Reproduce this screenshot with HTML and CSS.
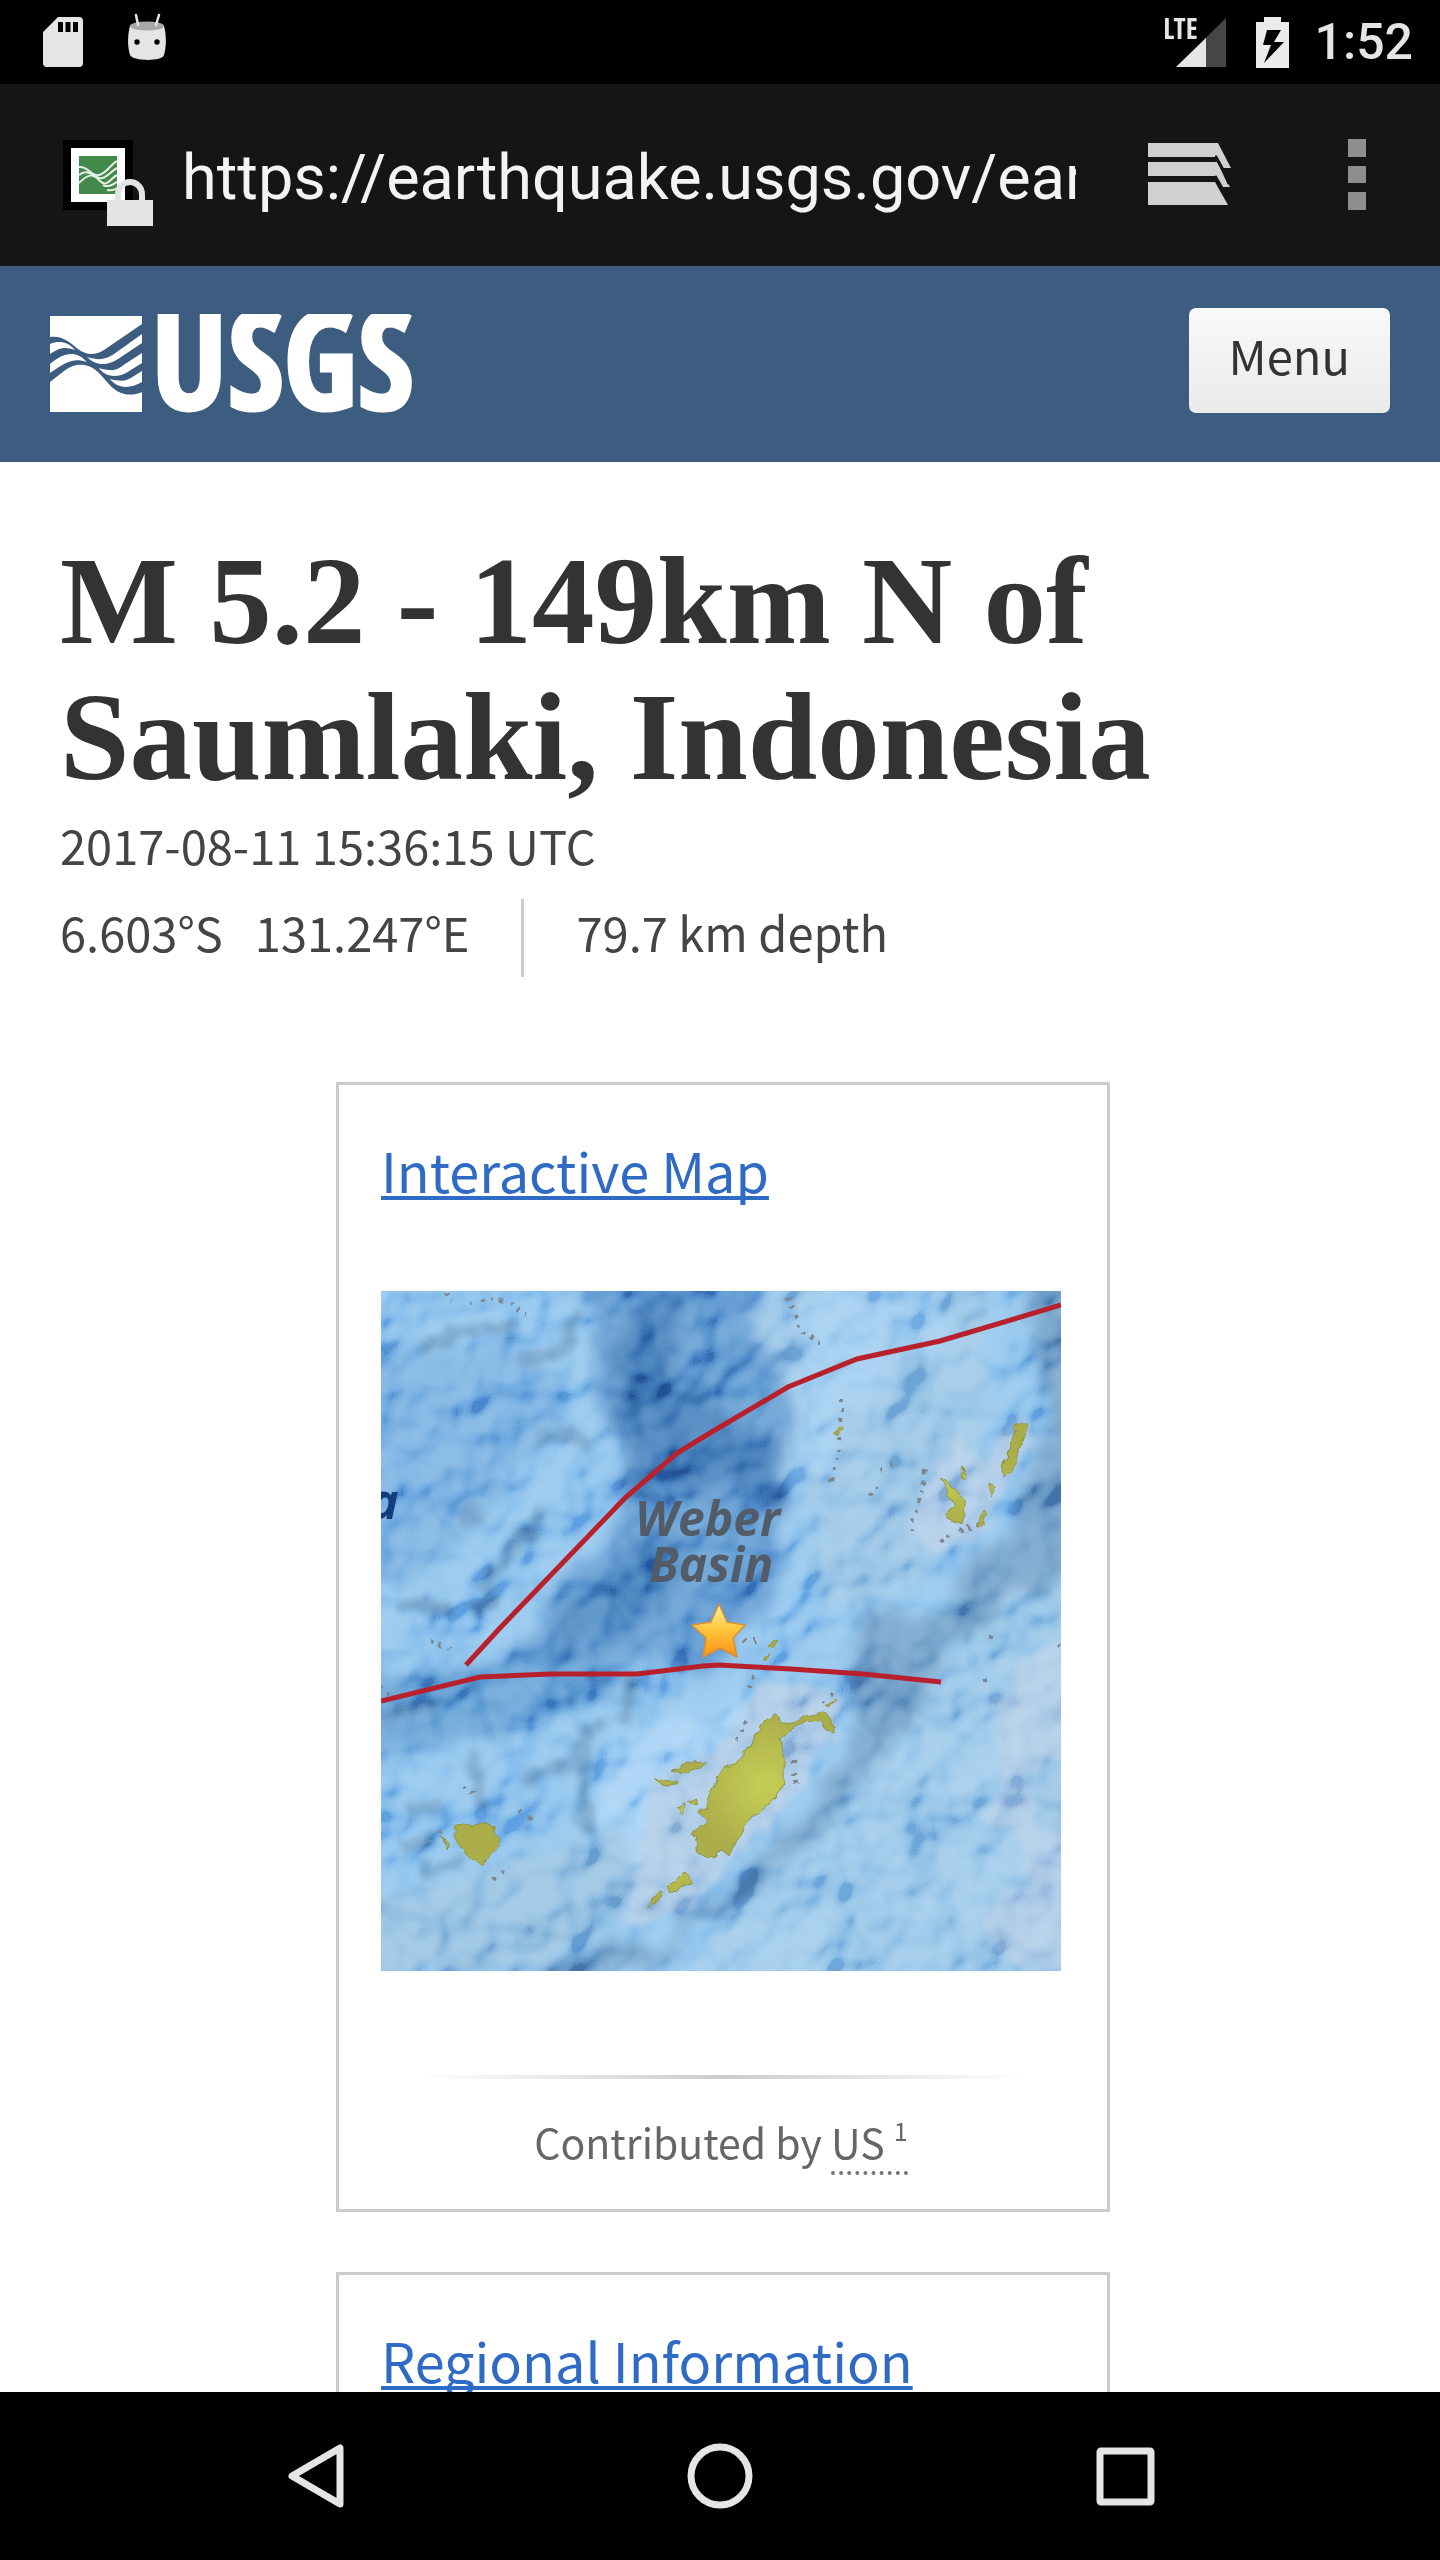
FILE: index.html
```html
<!DOCTYPE html>
<html lang="en">
<head>
<meta charset="utf-8">
<meta name="viewport" content="width=device-width, initial-scale=1">
<title>M 5.2 - 149km N of Saumlaki, Indonesia</title>
<link rel="stylesheet" href="styles.css">
</head>
<body>
<div class="status-bar">
  <div class="status-group">
    <svg class="icon-sd" width="40" height="50" viewBox="0 0 40 50" aria-hidden="true"><path fill="#e5e5e5" fill-rule="evenodd" d="M15 0H36a4 4 0 0 1 4 4V46a4 4 0 0 1-4 4H4a4 4 0 0 1-4-4V15zM15 5v10h5V5zm7.500 0v10h5V5zm7.500 0v10h5V5z"/></svg>
    <svg class="icon-droid" width="40" height="50" viewBox="0 0 40 50" aria-hidden="true"><path d="M3 13C1 20 0 32 3 42c2 6 32 7 34 0c3-10 2-22 0-29C33 8 7 8 3 13z" fill="#e5e5e5"/><ellipse cx="20" cy="13" rx="17" ry="4.500" fill="#a8a8a8"/><path d="M9 2l2 10M32 2l-3 10" stroke="#e5e5e5" stroke-width="2.500" stroke-linecap="round"/><circle cx="10" cy="29" r="2.700"/><circle cx="30" cy="29" r="2.700"/></svg>
  </div>
  <div class="status-group">
    <div class="signal">
      <span class="signal-label">LTE</span>
      <svg width="50" height="49" viewBox="0 0 50 49" aria-hidden="true"><path d="M0 49L50 0V49z" fill="#464646"/><path d="M0 49L30 20V49z" fill="#e5e5e5"/></svg>
    </div>
    <svg class="icon-battery" width="33" height="51" viewBox="0 0 33 51" aria-hidden="true"><path fill="#ebebeb" fill-rule="evenodd" d="M8 0H25V5H33V51H0V5H8zM11 13L7 28h8L8 46L28 25H18L25 13z"/></svg>
    <time class="clock">1:52</time>
  </div>
</div>

<div class="browser-bar">
  <div class="site-badge">
    <svg width="92" height="90" viewBox="0 0 92 90" aria-hidden="true">
      <path d="M0 0H70V70H0z"/><path d="M8 8H62V62H8z" fill="#fff"/><path d="M16 16H54V54H16z" fill="#42894b"/>
      <g fill="none" stroke="#e4efe5" stroke-width="2"><path d="M16 27C26 26 28 37 36 35S48 24 54 21"/><path d="M16 35C24 28 30 36 36 38S48 31 54 28"/><path d="M16 43C26 33 30 34 37 41S48 38 54 35"/><path d="M40 45C46 48 50 44 54 42M44 50C48 51 51 50 54 48"/></g>
      <path fill="#e4e4e4" fill-rule="evenodd" d="M44 60H52V54a15 15 0 0 1 30 0V60H90V86H44zM58 60H76V54a9 9 0 0 0-18 0z"/>
    </svg>
  </div>
  <input class="address" type="text" aria-label="Address" value="https://earthquake.usgs.gov/earthquakes/eventpage" readonly>
  <button class="bar-button tabs" aria-label="Tabs"><svg width="84" height="64" viewBox="0 0 84 64"><g fill="#d0d0d0"><path d="M0 0H70L83 25H74L68 14H0z"/><path d="M0 19H69L82 44H73L67 33H0z"/><path d="M0 39H67L80 62H0z"/></g><path d="M67 14H68L74 25L81 41M67 33L74 45" fill="none" stroke="#151515" stroke-width="3"/></svg></button>
  <button class="bar-button more" aria-label="More options"><svg width="18" height="72" viewBox="0 0 18 72"><path d="M0 0H18V18H0zM0 27H18V44H0zM0 53H18V71H0z" fill="#8e8e8e"/></svg></button>
</div>

<div class="page">
  <header class="site-header">
    <a class="logo" href="#" aria-label="USGS home">
      <svg width="380" height="100" viewBox="0 0 380 100">
        <path d="M0 2H92V98H0z" fill="#fff"/>
        <path fill="#3d5d80" d="M0 23C13 21 22 30 28 35C37 42 46 41 54 36L92 10V78C78 84 66 79 58 69C50 60 44 52 34 51C25 50 20 53 14 57L0 68z"/>
        <g fill="#fff"><path d="M0 30C10 26 18 28 25 36C15 33 11 33 0 40z"/><path d="M0 50C14 38 26 36 37 48C25 44 18 46 0 59z"/><path d="M37 43C50 47 56 45 64 40L92 20V29L68 45C56 53 45 51 37 43z"/><path d="M49 54C62 58 68 56 75 50L92 39V49L76 59C67 64 55 63 49 54z"/><path d="M60 65C72 68 77 67 84 62L92 57V68C80 75 68 75 60 65z"/></g>
        <text class="logo-text" x="101" y="96">USGS</text>
      </svg>
    </a>
    <button class="menu-button">Menu</button>
  </header>

  <main class="event">
    <h1 class="event-title">M 5.2 - 149km N of Saumlaki, Indonesia</h1>
    <p class="event-time">2017-08-11 15:36:15 UTC</p>
    <div class="event-facts">
      <span class="location"><span>6.603°S</span><span>131.247°E</span></span>
      <span class="depth">79.7 km depth</span>
    </div>

    <section class="card">
      <h2 class="card-title"><a href="#">Interactive Map</a></h2>
      <svg class="map" viewBox="0 0 680 680" role="img" aria-label="Map of the epicenter in the Weber Basin">
        <defs>
          <filter id="soft" x="-20%" y="-20%" width="140%" height="140%"><feTurbulence type="fractalNoise" baseFrequency=".02" numOctaves="3" seed="7"/><feDisplacementMap in="SourceGraphic" scale="50" xChannelSelector="R" yChannelSelector="G"/><feGaussianBlur stdDeviation="7"/></filter>
          <filter id="edge" x="-20%" y="-20%" width="140%" height="140%"><feTurbulence type="fractalNoise" baseFrequency=".05" numOctaves="2" seed="3"/><feDisplacementMap in="SourceGraphic" scale="20" xChannelSelector="R" yChannelSelector="G"/><feGaussianBlur stdDeviation="3"/></filter>
          <filter id="rough" x="-20%" y="-20%" width="140%" height="140%"><feTurbulence type="fractalNoise" baseFrequency=".08" numOctaves="2" seed="4"/><feDisplacementMap in="SourceGraphic" scale="10" xChannelSelector="R" yChannelSelector="G"/></filter>
          <filter id="relief" x="0" y="0" width="100%" height="100%"><feTurbulence type="fractalNoise" baseFrequency=".015" numOctaves="3" seed="12"/><feGaussianBlur stdDeviation="2"/><feDiffuseLighting surfaceScale="34" diffuseConstant=".85" lighting-color="#fff"><feDistantLight azimuth="225" elevation="44"/></feDiffuseLighting></filter>
          <linearGradient id="gold" x1="0" y1="0" x2="0" y2="1"><stop offset="0" stop-color="#fff3a0"/><stop offset=".5" stop-color="#ffc43a"/><stop offset="1" stop-color="#ff9018"/></linearGradient>
          <radialGradient id="land"><stop offset="0" stop-color="#c6ce55"/><stop offset="1" stop-color="#abad4b"/></radialGradient>
        </defs>
        <rect width="680" height="680" fill="#85bdeb"/>
        <g filter="url(#soft)">
          <path d="M-30 60L150 50L180 140L120 200L70 280L-30 290z" fill="#6faadf"/>
          <path d="M200 -40H360L400 80L420 150L400 220L390 310L330 370L180 390L130 370L220 250L245 190L215 80z" fill="#5792cd"/>
          <path d="M225 50L300 0L290 100L340 110L400 140L405 220L340 190L260 210L240 130z" fill="#3a75b4"/>
          <path d="M190 310L260 250L310 250L300 290L250 340L160 370z" fill="#427fbc"/>
          <path d="M-30 385L120 375L270 370L230 400L160 430L90 450L-30 480z" fill="#5b9ad2"/>
          <path d="M400 -40H600L610 120L560 280L480 320L440 310L430 160L380 40z" fill="#92c0e4"/>
          <path d="M440 -20L560 -20L580 60L500 80L430 200L400 170z" fill="#96c6ed"/>
          <path d="M240 440L400 400L390 440L330 450L250 610L210 550z" fill="#9bcbf3"/>
          <path d="M720 230L600 310L540 400L430 530L350 620L270 720H720z" fill="#92c2e7"/>
          <path d="M-30 620L120 570L240 540L270 600L180 670L-30 700z" fill="#8dbbdf"/>
          <path d="M645 -30L730 -30V260L600 330L530 420L470 500L420 560L350 620L250 680L180 700L170 670L300 640L390 560L450 490L480 430L470 340L560 310L640 220L665 130z" fill="#6798c4"/>
        </g>
        <g filter="url(#edge)" fill="#a6c6e5">
          <path d="M700 340L640 370L615 420L620 500L600 530L640 545L650 590L605 620L610 660L640 675H700z"/>
          <path d="M380 390L460 400L455 450L430 460L420 500L375 545L345 580L310 620L240 635L260 560L270 490L350 450z"/>
          <path d="M570 145L600 170L640 120L650 150L600 245L550 265L530 230L550 190z"/>
          <path d="M645 480L700 470V550L655 540z" fill="#8ebce1"/>
        </g>
        <g filter="url(#edge)" fill="none" stroke="#5f90bc" stroke-width="14" opacity=".75">
          <path d="M40 60L90 35L135 40M155 145L190 145L210 155M15 315H70M90 320L115 310M80 230L100 220M135 255L155 240M100 300L160 220M145 490L190 470L205 440L225 430M200 450L205 540M245 430L250 380M30 520L60 510M20 555L50 545M140 70L180 60L200 20M0 430L60 410M490 440L520 430M90 460L100 515M40 580L80 570"/>
        </g>
        <rect class="relief" x="-20" y="-20" width="720" height="720" filter="url(#relief)"/>
        <g filter="url(#rough)">
          <g fill="none" stroke="#7e858c" stroke-width="4" stroke-dasharray="3 7"><path d="M90 12L105 8L128 10L145 25M63 2L70 10M408 5L414 22L418 43L440 52M460 108L458 160L450 190M500 180L515 170M488 204L500 195M545 180L530 240M560 250L600 230M375 350L362 350M372 385L370 400M365 430L355 450M412 470L415 500M440 410L455 402M82 495L95 505M140 520L153 530M0 395L8 405M50 350L70 358M60 540L66 555M112 588L124 580"/><path d="M610 345V352M676 355L680 360M605 387V394"/></g>
          <g fill="url(#land)" stroke="#92953f" stroke-width="1">
            <path d="M384 429L396 424L401 431L412 432L417 426L444 422L451 431L454 441L446 439L441 431L419 433L406 441L399 447L403 467L403 491L392 511L374 524L357 546L349 564L341 557L332 566L317 564L312 541L326 531L317 521L327 518L327 511L337 484L359 467L371 451z"/>
            <path d="M292 479L306 472L327 471L306 484zM272 487L282 491L296 489L282 497zM286 597L302 581L311 591L289 601zM264 619L279 602L282 607zM294 517L304 514L302 524zM306 512L316 508L318 515z"/>
            <path d="M74 536L89 531L114 537L117 554L101 574L86 564L74 547zM61 544L67 552L65 558zM383 365L389 363L384 371zM386 353L396 350L394 357zM445 415L453 409L449 417z"/>
            <path d="M636 132L646 132L642 149L629 182L622 186L621 179zM609 191L617 194L609 206zM601 219L607 222L602 236L597 234zM559 186L572 196L584 209V222L581 234L566 227L574 212zM581 176L585 189L579 189zM453 142L461 136L463 139L456 146z"/>
          </g>
        </g>
        <text class="sea-name" x="-12" y="228">a</text>
        <text class="basin-name" x="254" y="245">Weber</text>
        <text class="basin-name" x="268" y="291">Basin</text>
        <path class="fault" d="M85 374L119 337L244 207L296 162L339 136L407 96L476 68L559 50L680 14"/>
        <path class="fault" d="M0 410L99 386L169 383L256 383L322 375L338 374L410 378L482 383L560 391"/>
        <path d="M338 313L346 331L364 334L352 347L356 366L339 357L322 366L325 347L311 334L330 331z" fill="url(#gold)" stroke="#d9902e" stroke-width="1.500" stroke-linejoin="round"/>
      </svg>
      <hr class="rule">
      <p class="credit">Contributed by <abbr title="USGS National Earthquake Information Center">US <sup>1</sup></abbr></p>
    </section>

    <section class="card">
      <h2 class="card-title"><a href="#">Regional Information</a></h2>
    </section>
  </main>
</div>

<nav class="nav-bar" aria-label="System">
  <button aria-label="Back"><svg width="66" height="66" viewBox="0 0 66 66"><path d="M58 5V61L10 33z"/></svg></button>
  <button aria-label="Home"><svg width="66" height="66" viewBox="0 0 66 66"><circle cx="33" cy="33" r="29"/></svg></button>
  <button aria-label="Recent apps"><svg width="66" height="66" viewBox="0 0 66 66"><rect x="8" y="8" width="51" height="51" rx="1"/></svg></button>
</nav>
</body>
</html>
```
FILE: styles.css
```css
* { box-sizing: border-box; }

body {
  margin: 0;
  height: 100vh;
  display: flex;
  flex-direction: column;
  background: #fff;
  color: #444;
  font-family: "Noto Sans CJK SC", "Open Sans", sans-serif;
}

h1, h2, p { margin: 0; }
svg { display: block; }
button { border: 0; padding: 0; background: none; font: inherit; }

/* Android status bar */
.status-bar {
  flex: none;
  height: 84px;
  padding: 0 27px 0 43px;
  display: flex;
  justify-content: space-between;
  align-items: center;
  background: #000;
  color: #e5e5e5;
  font-family: Roboto, sans-serif;
}
.status-group { display: flex; align-items: center; }
.icon-droid { margin: 0 0 8px 44px; }
.signal { display: flex; align-items: flex-start; }
.signal-label {
  margin-right: -22px;
  font: bold 28px/20px "Open Sans Condensed", "Liberation Sans Narrow", sans-serif;
}
.icon-battery { margin: 0 26px 0 30px; }
.clock { font-size: 50px; line-height: 84px; font-weight: 500; }

/* Browser toolbar */
.browser-bar {
  flex: none;
  height: 182px;
  padding: 0 74px 0 63px;
  display: flex;
  align-items: center;
  background: #151515;
}
.site-badge { padding-top: 20px; }
.address {
  flex: 1;
  min-width: 0;
  margin: 0 72px 0 27px;
  padding: 6px 0 0;
  border: 0;
  background: none;
  color: #f3f3f3;
  font: 63px/80px Roboto, sans-serif;
}
.more { margin-left: 116px; }

/* Web page */
.page { flex: 1; min-height: 0; overflow: hidden; }
.site-header {
  height: 196px;
  padding: 0 50px;
  display: flex;
  align-items: center;
  justify-content: space-between;
  background: #3d5d80;
}
.logo-text {
  fill: #fff;
  stroke: #fff;
  stroke-width: 3;
  font: bold 136px "Open Sans Condensed", "Liberation Sans Narrow", sans-serif;
}
.menu-button {
  height: 105px;
  margin-bottom: 7px;
  padding: 0 40px 12px;
  border-radius: 7px;
  background: linear-gradient(#f9f9f9, #eaeaea);
  color: #333;
  font-size: 47px;
  line-height: 92px;
}

.event { padding: 71px 54px 0 60px; }
.event-title {
  color: #333;
  font: bold 125px/136px "Liberation Serif", serif;
}
.event-time { font-size: 47px; line-height: 80px; }
.event-facts {
  display: flex;
  margin: 14px 0 105px;
  font-size: 47px;
  line-height: 66px;
}
.location {
  display: flex;
  gap: 32px;
  height: 78px;
  padding-right: 52px;
  border-right: 3px solid #ccc;
}
.depth { padding-left: 52px; }

.card {
  max-width: 774px;
  margin: 0 auto 60px;
  padding: 45px 46px 34px 42px;
  border: 3px solid #ccc;
}
.card-title { font-size: 54px; line-height: 80px; font-weight: 400; }
.card-title a {
  color: #2f6bc4;
  text-decoration-thickness: 4px;
  text-underline-offset: 3px;
  text-decoration-skip-ink: none;
}
.map { width: 100%; margin-top: 81px; }
.relief { mix-blend-mode: soft-light; opacity: .6; }
.fault { fill: none; stroke: #b8202c; stroke-width: 5; }
.basin-name { fill: #525b68; font: italic bold 48px "Open Sans", sans-serif; }
.sea-name { fill: #113f7e; font: italic bold 50px "Open Sans", sans-serif; }
.rule {
  height: 4px;
  margin: 104px 33px 32px 37px;
  border: 0;
  background: linear-gradient(90deg, transparent, #ccc, transparent);
}
.credit { color: #666; font-size: 41px; line-height: 60px; text-align: center; }
.credit abbr {
  display: inline-block;
  border-bottom: 4px dotted #777;
  text-decoration: none;
}
.credit sup { font-size: 25px; line-height: 0; vertical-align: 18px; }

/* Android navigation bar */
.nav-bar {
  flex: none;
  height: 168px;
  padding: 0 282px;
  display: flex;
  align-items: center;
  justify-content: space-between;
  background: #000;
}
.nav-bar svg { fill: none; stroke: #e5e5e5; stroke-width: 7; stroke-linejoin: round; }
```
